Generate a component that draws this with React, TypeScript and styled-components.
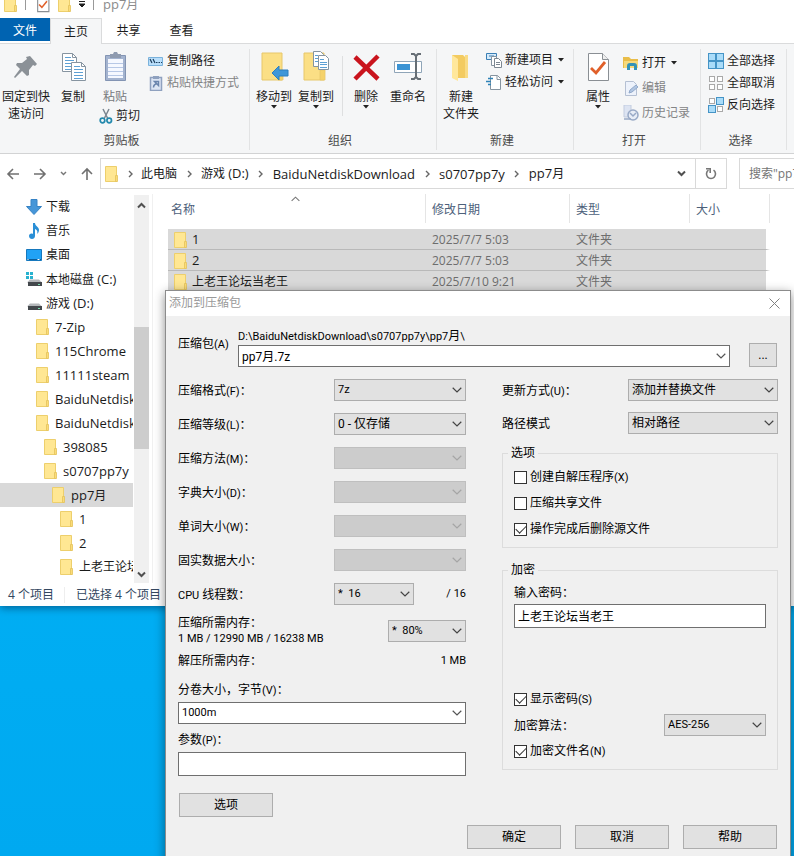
import React from 'react';
import styled, { createGlobalStyle } from 'styled-components';

const cjk = '"Noto Sans CJK SC"';
const shellFont = `"Open Sans", ${cjk}, sans-serif`;
const dialogFont = `Roboto, ${cjk}, sans-serif`;

const GlobalStyle = createGlobalStyle`
  * { box-sizing: border-box; }
  body { margin: 0; overflow: hidden; }
  button, input, select { font: inherit; color: inherit; border-radius: 0; margin: 0; }
  button { background: none; border: 0; padding: 0; }
`;

/* Sets Latin runs in a different size from the Chinese text around them. */
const LatinRun = styled.span`
  font-size: var(--latin-size);
`;
const Mixed = ({ text }: { text: string }) => (
  <>
    {text.split(/([\x21-\x7e][\x20-\x7e]*)/).map((part, i) =>
      i % 2 ? <LatinRun key={i}>{part}</LatinRun> : part,
    )}
  </>
);

const Desktop = styled.div`
  --latin-size: 13px;
  position: relative;
  height: 100vh;
  overflow: hidden;
  background: linear-gradient(#00b8fa, #00a9f0);
  font: 12px/16px ${shellFont};
  color: #1b1b1b;
`;

/* ---------- Explorer window ---------- */

const Explorer = styled.main`
  display: flex;
  flex-direction: column;
  background: #fff;
  box-shadow: 0 2px 8px rgba(0, 50, 90, 0.6);
`;

const TitleBar = styled.header`
  display: flex;
  align-items: center;
  height: 28px;
  margin-top: -10px;
  padding-left: 3px;
  color: #8b8b8b;
`;
const TitleItem = styled.span<{ $gap?: number }>`
  display: flex;
  margin-left: ${(p) => p.$gap ?? 0}px;
`;
const TitleRule = styled.span<{ $gap: number }>`
  width: 1px;
  height: 12px;
  margin-left: ${(p) => p.$gap}px;
  background: #999;
`;

const Tabs = styled.nav`
  display: flex;
  height: 26px;
  border-bottom: 1px solid #dadbdc;
`;
const Tab = styled.button<{ $kind?: 'file' | 'active' }>`
  width: ${(p) => (p.$kind === 'file' ? 50 : p.$kind === 'active' ? 52 : 53)}px;
  height: ${(p) => (p.$kind === 'file' ? 23 : 26)}px;
  padding-top: ${(p) => (p.$kind === 'file' ? 2 : 0)}px;
  ${(p) => p.$kind === 'file' && 'background: #0063b1; color: #fff;'}
  ${(p) => p.$kind === 'active' && 'background: #f5f6f7; border: 1px solid #dadbdc; border-bottom: 0;'}
`;

const Ribbon = styled.section`
  display: flex;
  height: 110px;
  background: #f5f6f7;
  border-bottom: 1px solid #d2d3d4;
`;
const Group = styled.section<{ $width: number }>`
  flex: none;
  display: flex;
  flex-direction: column;
  width: ${(p) => p.$width}px;
  margin: 5px 0 3px;
  border-right: 1px solid #e2e3e4;
`;
const GroupBody = styled.div<{ $pad?: number }>`
  display: flex;
  flex: 1;
  padding-left: ${(p) => p.$pad ?? 0}px;
`;
const GroupTitle = styled.h2`
  margin: 0;
  font: inherit;
  line-height: 18px;
  text-align: center;
  color: #4a4a4a;
  padding-right: 6px;
`;
const GroupRule = styled.span`
  width: 1px;
  height: 60px;
  margin: 7px 2px 0 5px;
  background: #dedfe0;
`;
const LargeButton = styled.button<{ $width: number }>`
  display: flex;
  flex-direction: column;
  align-items: center;
  align-self: flex-start;
  width: ${(p) => p.$width}px;
  padding-top: 1px;
  line-height: 17px;
  white-space: pre;
  svg:first-child { margin: 1px 0 5px; }
`;
const SmallColumn = styled.div<{ $gap?: number; $top?: number }>`
  display: flex;
  flex-direction: column;
  align-items: flex-start;
  gap: ${(p) => p.$gap ?? 0}px;
  margin: ${(p) => p.$top ?? 1}px 0 0 1px;
`;
const SmallButton = styled.button`
  display: flex;
  align-items: center;
  gap: 3px;
  height: 22px;
  white-space: nowrap;
  &:disabled { color: #838485; }
  span + svg { margin-left: 2px; }
`;
const PasteColumn = styled.div`
  display: flex;
  flex-direction: column;
  align-items: flex-start;
  width: 53px;
  color: #77797c;
  ${SmallButton} { color: #1b1b1b; margin-left: 5px; }
`;

const AddressRow = styled.section`
  display: flex;
  align-items: center;
  height: 40px;
  padding: 0 0 1px;
`;
const NavButtons = styled.div`
  display: flex;
  align-items: center;
  justify-content: space-between;
  width: 100px;
  padding: 0 6px 0 6px;
  button { display: flex; }
`;
const AddressBar = styled.div`
  flex: 1;
  display: flex;
  align-items: center;
  height: 31px;
  border: 1px solid #d9d9d9;
  padding-left: 3px;
`;
const Crumb = styled.button<{ $latin?: boolean }>`
  font-size: ${(p) => (p.$latin ? 13 : 12)}px;
  white-space: nowrap;
`;
const CrumbGap = styled.span<{ $first?: boolean }>`
  display: flex;
  justify-content: center;
  width: ${(p) => (p.$first ? 21 : 24)}px;
`;
const AddressEnd = styled.button<{ $ruled?: boolean }>`
  display: flex;
  align-items: center;
  justify-content: center;
  width: ${(p) => (p.$ruled ? 31 : 28)}px;
  height: 29px;
  margin-left: ${(p) => (p.$ruled ? 0 : 'auto')};
  border-left: ${(p) => (p.$ruled ? '1px solid #d9d9d9' : '0')};
`;
const SearchBox = styled.input`
  width: 55px;
  height: 31px;
  margin-left: 12px;
  padding: 0 0 0 9px;
  border: 1px solid #d9d9d9;
  border-right: 0;
  color: #6d6d6d;
  outline: 0;
`;

const Content = styled.div`
  display: flex;
  height: 389px;
`;
const Tree = styled.ul`
  list-style: none;
  margin: 0;
  padding: 1px 0 0;
  width: 133px;
  overflow: hidden;
`;
const TreeItem = styled.button<{ $indent: number; $selected?: boolean }>`
  display: flex;
  align-items: center;
  gap: 4px;
  width: 100%;
  height: 24px;
  padding-left: ${(p) => p.$indent}px;
  background: ${(p) => (p.$selected ? '#d9d9d9' : 'transparent')};
  white-space: nowrap;
  text-align: left;
  svg { flex: none; }
`;
const ScrollBar = styled.div`
  display: flex;
  flex-direction: column;
  align-items: center;
  width: 15px;
  margin: 1px 0 0 1px;
  padding: 7px 0 5px;
  background: #f0f0f0;
`;
const ScrollThumb = styled.span`
  width: 15px;
  height: 122px;
  margin: 118px 0 auto;
  background: #cdcdcd;
`;
const FilePane = styled.section`
  flex: 1;
  margin-left: 3px;
  padding-left: 15px;
  border-left: 1px solid #f0f0f0;
`;
const FileTable = styled.table`
  width: 602px;
  table-layout: fixed;
  border-collapse: separate;
  border-spacing: 0;
  th {
    position: relative;
    height: 29px;
    padding: 3px 0 0 6px;
    font-weight: normal;
    text-align: left;
    color: #4c607a;
    border-right: 1px solid #e5e5e5;
  }
  th:first-child { padding-left: 3px; }
  tbody::before { content: ''; display: block; height: 6px; }
  td {
    height: 21px;
    padding: 1px 0 0 6px;
    background: #d9d9d9;
    border-bottom: 1px solid #b9b9b9;
    color: #6d6d6d;
  }
  td:first-child { padding-left: 5px; color: #1b1b1b; }
  td:last-child { border-right: 4px solid #fff; }
`;
const SortMark = styled.span`
  position: absolute;
  left: 123px;
  top: 2px;
  display: flex;
`;
const FileName = styled.span`
  display: flex;
  align-items: center;
  gap: 3px;
`;
const StatusBar = styled.footer`
  display: flex;
  align-items: center;
  gap: 10px;
  height: 23px;
  padding-left: 8px;
  color: #33475f;
  span + span { border-left: 1px solid #eee; padding-left: 11px; }
`;

/* ---------- Add to archive dialog ---------- */

const Dialog = styled.section`
  --latin-size: 11px;
  position: absolute;
  left: 165px;
  right: 3px;
  top: 290px;
  border: 1px solid #8c8c8c;
  background: #f0f0f0;
  color: #000;
  font-family: ${dialogFont};
  box-shadow: 0 3px 10px rgba(0, 0, 0, 0.45);
`;
const DialogTitle = styled.header`
  display: flex;
  align-items: center;
  justify-content: space-between;
  height: 25px;
  padding: 0 10px 1px 3px;
  background: #fff;
  color: #999;
  button { display: flex; }
`;
const DialogBody = styled.form`
  padding: 12px 12px 24px;
`;
const ArchiveRow = styled.div`
  display: flex;
  align-items: flex-end;
  padding-right: 1px;
`;
const ArchiveLabel = styled.label`
  width: 60px;
  padding-bottom: 14px;
`;
const ArchiveField = styled.div`
  flex: 1;
  margin-right: 19px;
`;
const Path = styled.div`
  line-height: 16px;
`;
const PushButton = styled.button<{ $small?: boolean }>`
  width: ${(p) => (p.$small ? 28 : 94)}px;
  height: 24px;
  border: 1px solid #adadad;
  background: #e1e1e1;
`;
const Columns = styled.div`
  display: grid;
  grid-template-columns: 288px minmax(0, 1fr);
  gap: 36px;
  margin-top: 12px;
`;
const Column = styled.div`
  display: flex;
  flex-direction: column;
`;
const FieldRow = styled.div<{ $top?: number }>`
  display: flex;
  align-items: center;
  justify-content: space-between;
  min-height: 22px;
  margin-top: ${(p) => p.$top ?? 12}px;
`;
const FieldLabel = styled.label`
  padding-top: 2px;
`;
const MemoryText = styled.label`
  line-height: 15px;
`;
const TextRow = styled.div<{ $top: number }>`
  display: flex;
  justify-content: space-between;
  margin-top: ${(p) => p.$top}px;
`;
const Threads = styled.div`
  display: flex;
  align-items: center;
  justify-content: space-between;
  width: 132px;
`;
const Box = styled.span<{ $width?: number; $top?: number }>`
  position: relative;
  display: block;
  width: ${(p) => (p.$width ? `${p.$width}px` : '100%')};
  height: 22px;
  margin-top: ${(p) => p.$top ?? 0}px;
  svg { position: absolute; right: 4px; top: 8px; pointer-events: none; }
`;
const SelectControl = styled.select<{ $latin?: boolean }>`
  appearance: none;
  display: block;
  width: 100%;
  height: 22px;
  padding: 0 16px 0 3px;
  border: 1px solid #adadad;
  background: #e1e1e1;
  font-size: ${(p) => (p.$latin ? 'var(--latin-size)' : '12px')};
  white-space: pre;
  &:disabled { background: #cccccc; border-color: #bfbfbf; opacity: 1; }
`;
const TextBox = styled.input<{ $combo?: boolean; $latin?: boolean; $top?: number }>`
  display: block;
  width: 100%;
  height: ${(p) => (p.$combo ? 22 : 24)}px;
  margin-top: ${(p) => p.$top ?? 0}px;
  padding: 0 3px 2px;
  border: 1px solid #6f6f6f;
  background: #fff;
  outline: 0;
  font-size: ${(p) => (p.$latin ? 'var(--latin-size)' : '12px')};
`;
const Fieldset = styled.fieldset<{ $top: number; $pad: number }>`
  min-width: 0;
  margin: ${(p) => p.$top}px 0 0;
  padding: ${(p) => p.$pad}px 11px 5px;
  border: 1px solid #dcdcdc;
  legend { padding: 0 3px; margin-left: -6px; line-height: 16px; }
`;
const CheckLabel = styled.label<{ $top?: number }>`
  display: flex;
  align-items: center;
  gap: 3px;
  height: 26px;
  margin-top: ${(p) => p.$top ?? 0}px;
`;
const CheckBox = styled.input`
  appearance: none;
  width: 13px;
  height: 13px;
  border: 1px solid #333;
  background: #fff;
  display: grid;
  place-items: center;
  &:checked::before {
    content: '';
    width: 9px;
    height: 5px;
    border: solid #333;
    border-width: 0 0 1px 1px;
    transform: rotate(-45deg);
    margin-bottom: 3px;
  }
`;
const Footer = styled.footer`
  display: flex;
  justify-content: flex-end;
  gap: 14px;
  margin-top: 8px;
  padding-right: 1px;
`;
const OptionsButton = styled(PushButton)`
  margin: 17px 0 0 1px;
`;

/* ---------- Icons ---------- */

const Chevron = ({ color = '#555', up = false, w = 10 }: { color?: string; up?: boolean; w?: number }) => (
  <svg width={w} height="6" viewBox="0 0 10 6" fill="none" stroke={color} strokeWidth="1.2">
    <path d={up ? 'M.7 5.2 5 1l4.300 4.200' : 'M.7.8 5 5 9.300.8'} />
  </svg>
);
const ThickChevron = ({ up = false, small = false }: { up?: boolean; small?: boolean }) => (
  <svg width={small ? 7 : 9} height={small ? 5 : 7} viewBox="0 0 9 7" fill="none" stroke={small ? '#777' : '#505050'} strokeWidth="2">
    <path d={up ? 'M1 5.500 4.500 2 8 5.500' : 'M1 1.500 4.500 5 8 1.500'} />
  </svg>
);
const Drop = () => (
  <svg width="6" height="4" viewBox="0 0 6 4"><path d="M0 0h6L3 3.500z" fill="#222" /></svg>
);
const FolderIcon = ({ size = 16 }: { size?: number }) => (
  <svg width={size} height={size} viewBox="0 0 16 16">
    <path d="M1.500.5h11v15h-11z" fill="#ffe793" stroke="#edcf6c" />
    <path d="M11.500 9.500h2v6h-2z" fill="#fbdc78" stroke="#e3c15b" strokeWidth=".8" />
  </svg>
);
const BigFolder = () => (
  <>
    <path d="M4 2h20v27H4z" fill="#fbdf85" stroke="#e7c76b" />
    <path d="M20 19h5v10h-5z" fill="#f5d26b" stroke="#e7c76b" strokeWidth=".8" />
  </>
);
const PinIcon = () => (
  <svg width="32" height="32" viewBox="0 0 32 32">
    <path d="m20 5 7 8-2 2-2-1-4 5 0 5-2 1-5-5-7 7-1-1 6-8-4-4 1-2 5 0 5-4-1-2z" fill="#8b9197" />
  </svg>
);
const Page = ({ x, y }: { x: number; y: number }) => (
  <g transform={`translate(${x} ${y})`}>
    <path d="M.5.500h10l4 4v14H.5z" fill="#fff" stroke="#8694a0" />
    <path d="M10.500.5v4h4" fill="none" stroke="#8694a0" />
    <path d="M3 4.500h6M3 7.500h9M3 10.500h9M3 13.500h9M3 16.500h9" stroke="#5da0d4" />
  </g>
);
const CopyIcon = () => (
  <svg width="32" height="32" viewBox="0 0 32 32"><Page x={5} y={2} /><Page x={14} y={11} /></svg>
);
const PasteIcon = () => (
  <svg width="32" height="32" viewBox="0 0 32 32">
    <path d="M6.500 4.500h20v25h-20z" fill="#a3b3cf" stroke="#8394b3" />
    <path d="M9 8h15v19H9z" fill="#f5f8ff" />
    <path d="M9 12.500h15M9 16.500h15M9 20.500h15M9 24.500h15" stroke="#b7c8e6" />
    <path d="M11 3h3l1-2h3l1 2h3v4H11z" fill="#8f9bb0" />
  </svg>
);
const CutIcon = () => (
  <svg width="14" height="16" viewBox="0 0 14 16" fill="none">
    <path d="m4 1 5 10M10 1 5 11" stroke="#7b8690" strokeWidth="1.500" />
    <circle cx="3.500" cy="12.500" r="2.300" stroke="#2389ad" strokeWidth="1.700" />
    <circle cx="10.200" cy="12.500" r="2.300" stroke="#2389ad" strokeWidth="1.700" />
  </svg>
);
const PathIcon = () => (
  <svg width="16" height="16" viewBox="0 0 16 16">
    <path d="M.5 4.500h14v8H.5z" fill="#b9defa" stroke="#7ab2dc" />
    <path d="m2 6 2 4M5 6l2 4" stroke="#1d3f5e" strokeWidth="1.200" />
    <path d="M8 9.500h1.500m1 0H12m1 0h1" stroke="#1d3f5e" />
  </svg>
);
const ShortcutIcon = () => (
  <svg width="16" height="16" viewBox="0 0 16 16">
    <path d="M2.500 2.500h11v13h-11z" fill="#dce5f4" stroke="#8fa1bf" strokeWidth="1.500" />
    <path d="M5 1h6v3H5z" fill="#8fa1bf" />
    <path d="M5.500 12.500q0-3 3.500-4M6.500 6.500h4v4z" fill="none" stroke="#6a84ad" strokeWidth="1.500" />
  </svg>
);
const MoveIcon = () => (
  <svg width="32" height="32" viewBox="0 0 32 32">
    <BigFolder />
    <path d="m14 22 7-7v4h9v6h-9v4z" fill="#3f97d8" stroke="#2c7fc0" />
  </svg>
);
const CopyToIcon = () => (
  <svg width="32" height="32" viewBox="0 0 32 32">
    <BigFolder />
    <g fill="#fff" stroke="#8694a0">
      <path d="M13.500.5h7l3 3v12h-10z" /><path d="M18.500 4.500h7l3 3v11h-10z" />
    </g>
    <path d="M15 4.500h3m-3 3h3m-3 3h3m2-2h4m-4 3h7m-7 2h7m-7 3h7" stroke="#5da0d4" />
  </svg>
);
const DeleteIcon = () => (
  <svg width="32" height="32" viewBox="0 0 32 32">
    <path d="m5 6 23 22M28 5 5 28" stroke="#c9141d" strokeWidth="4.500" />
  </svg>
);
const RenameIcon = () => (
  <svg width="32" height="32" viewBox="0 0 32 32" fill="none">
    <path d="M2.500 10.500h27v11h-27z" fill="#fff" stroke="#8fa5b8" />
    <path d="M5 13h13v6H5z" fill="#3a93d4" />
    <path d="M19 3h3l2 2 2-2h3M24 5v21M19 28h3l2-2 2 2h3" stroke="#666e75" strokeWidth="2" />
  </svg>
);
const NewFolderIcon = () => (
  <svg width="32" height="32" viewBox="0 0 32 32">
    <path d="M7 4h11l5 5v18H7z" fill="#f3cb61" />
    <path d="m7 4 6 4v22l-6-3z" fill="#ffe79b" />
    <path d="M20 4h3v23h-3z" fill="#f9db84" />
  </svg>
);
const NewItemIcon = () => (
  <svg width="16" height="16" viewBox="0 0 16 16" fill="#fff">
    <path d="M.5 1.500h10v6H.5z" fill="#d5eafa" stroke="#3a7fb5" />
    <path d="M3 4h5" stroke="#3a7fb5" />
    <path d="M5.500 4.500h5v9h-5z" stroke="#8694a0" />
    <path d="M8.500 6.500h4l3 3v6h-7z" stroke="#7c8791" />
    <path d="M10 10.500h4m-4 2h4" stroke="#7c8791" />
  </svg>
);
const EasyAccessIcon = () => (
  <svg width="16" height="16" viewBox="0 0 16 16">
    <path d="M4.500 1.500h7l3 3v11h-10z" fill="#fff" stroke="#8694a0" />
    <path d="M11 1.500v4h4" fill="none" stroke="#8694a0" />
    <path d="M2 4.500h5m-7 3h5m-3 3h3" stroke="#2f83b8" strokeWidth="1.500" />
  </svg>
);
const CheckPage = ({ size }: { size: number }) => (
  <svg width={size} height={size} viewBox="0 0 32 32">
    <path d="M6.500 2.500h14l6 6v21h-20z" fill="#fff" stroke="#8a8f94" strokeWidth={size < 20 ? 2 : 1} />
    <path d="M20.500 2.500v6h6" fill="#eee" stroke="#8a8f94" />
    <path d="m9 17 5 5 9-11" fill="none" stroke="#e0602a" strokeWidth="2.800" />
  </svg>
);
const OpenIcon = () => (
  <svg width="16" height="16" viewBox="0 0 16 16">
    <path d="M0 2h6l2 2h7v9H0z" fill="#e9bd49" /><path d="M1 6h14v7H1z" fill="#f7da7c" />
    <path d="M4 15V11q0-3 3-3h4q3 0 3 3v4h-3v-4H7v4z" fill="#3493b8" />
  </svg>
);
const EditIcon = () => (
  <svg width="16" height="16" viewBox="0 0 16 16">
    <path d="M2.500 1.500h8l3 3v11h-11z" fill="#edf2fb" stroke="#b5c0d3" />
    <path d="m6 13 1-3 6-5 2 2-6 5z" fill="#b1c6e2" stroke="#92a9ca" />
  </svg>
);
const HistoryIcon = () => (
  <svg width="16" height="16" viewBox="0 0 16 16">
    <path d="M1 0h7v12H1z" fill="#dde4f2" stroke="#c2ccdf" />
    <circle cx="10" cy="10" r="5" fill="#e8edf6" stroke="#98a9c6" strokeWidth="1.500" />
    <path d="m7 8 3 3 3-3M1 14h7" fill="none" stroke="#98a9c6" strokeWidth="1.500" />
  </svg>
);
const GridIcon = ({ on }: { on: boolean[] }) => (
  <svg width="16" height="16" viewBox="0 0 16 16">
    {on.map((selected, i) => (
      <rect
        key={i}
        x={(i % 2) * 8 + (selected ? 0.5 : 1.500)}
        y={Math.floor(i / 2) * 8 + (selected ? 0.5 : 1.500)}
        width={selected ? 7 : 5}
        height={selected ? 7 : 5}
        fill={selected ? '#aadcf9' : '#fff'}
        stroke={selected ? '#4594c6' : '#a9a9a9'}
      />
    ))}
  </svg>
);
const Arrow = ({ turn, color = '#707070' }: { turn: number; color?: string }) => (
  <svg width="14" height="14" viewBox="0 0 14 14" fill="none" stroke={color} strokeWidth="1.600">
    <path d="M13 7H2m5-5L2 7l5 5" transform={`rotate(${turn} 7 7)`} />
  </svg>
);
const RefreshIcon = () => (
  <svg width="12" height="13" viewBox="0 0 12 13" fill="none" stroke="#777" strokeWidth="1.600">
    <path d="M8.500 3.200A4.500 4.500 0 1 1 3.500 3.200M1 1.800h4.200V6" />
  </svg>
);
const DownloadIcon = () => (
  <svg width="16" height="16" viewBox="0 0 16 16"><path d="M5 .5h6v7h4.500L8 15.500.5 7.500H5z" fill="#4696d8" stroke="#3683c5" /></svg>
);
const MusicIcon = () => (
  <svg width="16" height="16" viewBox="0 0 16 16">
    <path d="M7 0h2c0 3 4 4 4 7 0 2-1 3-2 4 1-3 0-4-2-5v7c0 4-6 4-6 0 0-2 2-3 4-2z" fill="#2a8fd6" />
  </svg>
);
const DesktopIcon = () => (
  <svg width="16" height="16" viewBox="0 0 16 16">
    <path d="M.5 2.500h15v11H.5z" fill="#21a2f5" stroke="#1678bd" /><path d="M1 12.500h14" stroke="#0b5d9a" />
    <path d="M1.500 12.500h1m9 0h2" stroke="#fff" />
  </svg>
);
const DriveIcon = ({ system }: { system?: boolean }) => (
  <svg width="16" height="16" viewBox="0 0 16 16">
    {system && <path d="M0 1h3v3H0zm4 0h3v3H4zM0 5h3v3H0zm4 0h3v3H4z" fill="#28b2cf" />}
    <path d="m4 8.500 9 0 3 3H1z" fill="#b4b7ba" /><path d="M2 11h14v4H2z" fill="#43484c" />
    <path d="M12 13.500h2" stroke="#7be0b0" />
  </svg>
);
const CloseIcon = () => (
  <svg width="11" height="11" viewBox="0 0 11 11"><path d="m.5.500 10 10m0-10-10 10" stroke="#808080" /></svg>
);
const Arrowhead = () => (
  <svg width="5" height="8" viewBox="0 0 5 8" fill="none" stroke="#666" strokeWidth="1.400">
    <path d="m1 1 3 3-3 3" />
  </svg>
);

/* ---------- Content ---------- */

const tree: { label: string; indent: number; icon?: React.ReactNode; selected?: boolean }[] = [
  { label: '下载', indent: 26, icon: <DownloadIcon /> },
  { label: '音乐', indent: 26, icon: <MusicIcon /> },
  { label: '桌面', indent: 26, icon: <DesktopIcon /> },
  { label: '本地磁盘 (C:)', indent: 26, icon: <DriveIcon system /> },
  { label: '游戏 (D:)', indent: 26, icon: <DriveIcon /> },
  { label: '7-Zip', indent: 35 },
  { label: '115Chrome', indent: 35 },
  { label: '11111steam', indent: 35 },
  { label: 'BaiduNetdisk', indent: 35 },
  { label: 'BaiduNetdisk', indent: 35 },
  { label: '398085', indent: 43 },
  { label: 's0707pp7y', indent: 43 },
  { label: 'pp7月', indent: 51, selected: true },
  { label: '1', indent: 59 },
  { label: '2', indent: 59 },
  { label: '上老王论坛', indent: 59 },
];

const files = [
  ['1', '2025/7/7 5:03'],
  ['2', '2025/7/7 5:03'],
  ['上老王论坛当老王', '2025/7/10 9:21'],
];

const formats = [
  { id: 'format', label: '压缩格式(F)：', value: '7z' },
  { id: 'level', label: '压缩等级(L)：', value: '0 - 仅存储' },
  { id: 'method', label: '压缩方法(M)：' },
  { id: 'dictionary', label: '字典大小(D)：' },
  { id: 'word', label: '单词大小(W)：' },
  { id: 'solid', label: '固实数据大小：' },
];

type SelectProps = { id: string; value?: string; width: number; latin?: boolean };
const Select = ({ id, value, width, latin }: SelectProps) => (
  <Box $width={width}>
    <SelectControl id={id} $latin={latin} disabled={!value}>
      <option>{value ?? ''}</option>
    </SelectControl>
    <Chevron color={value ? '#444' : '#a5a5a5'} />
  </Box>
);
const Check = ({ text, on, top }: { text: string; on?: boolean; top?: number }) => (
  <CheckLabel $top={top}>
    <CheckBox type="checkbox" defaultChecked={on} />
    <span><Mixed text={text} /></span>
  </CheckLabel>
);

const ExplorerWindow = () => (
  <Explorer>
    <TitleBar>
      <TitleItem><FolderIcon /></TitleItem>
      <TitleRule $gap={6} />
      <TitleItem $gap={8}><CheckPage size={18} /></TitleItem>
      <TitleItem $gap={5}><FolderIcon /></TitleItem>
      <TitleItem $gap={5}>
        <svg width="8" height="8" viewBox="0 0 8 8"><path d="M1 1.500h6M1 4h6L4 7z" fill="#222" stroke="#222" /></svg>
      </TitleItem>
      <TitleRule $gap={7} />
      <TitleItem $gap={9}><span><Mixed text="pp7月" /></span></TitleItem>
    </TitleBar>
    <Tabs>
      <Tab $kind="file">文件</Tab>
      <Tab $kind="active">主页</Tab>
      <Tab>共享</Tab>
      <Tab>查看</Tab>
    </Tabs>
    <Ribbon>
      <Group $width={250}>
        <GroupBody>
          <LargeButton $width={52}><PinIcon />{'固定到快\n速访问'}</LargeButton>
          <LargeButton $width={42}><CopyIcon />复制</LargeButton>
          <PasteColumn>
            <LargeButton $width={42}><PasteIcon />粘贴</LargeButton>
            <SmallButton><CutIcon />剪切</SmallButton>
          </PasteColumn>
          <SmallColumn>
            <SmallButton><PathIcon />复制路径</SmallButton>
            <SmallButton disabled><ShortcutIcon />粘贴快捷方式</SmallButton>
          </SmallColumn>
        </GroupBody>
        <GroupTitle>剪贴板</GroupTitle>
      </Group>
      <Group $width={187}>
        <GroupBody $pad={3}>
          <LargeButton $width={42}><MoveIcon />移动到<Drop /></LargeButton>
          <LargeButton $width={42}><CopyToIcon />复制到<Drop /></LargeButton>
          <GroupRule />
          <LargeButton $width={42}><DeleteIcon />删除<Drop /></LargeButton>
          <LargeButton $width={42}><RenameIcon />重命名</LargeButton>
        </GroupBody>
        <GroupTitle>组织</GroupTitle>
      </Group>
      <Group $width={137}>
        <GroupBody>
          <LargeButton $width={48}><NewFolderIcon />{'新建\n文件夹'}</LargeButton>
          <SmallColumn $top={0}>
            <SmallButton><NewItemIcon /><span>新建项目</span><Drop /></SmallButton>
            <SmallButton><EasyAccessIcon /><span>轻松访问</span><Drop /></SmallButton>
          </SmallColumn>
        </GroupBody>
        <GroupTitle>新建</GroupTitle>
      </Group>
      <Group $width={127}>
        <GroupBody>
          <LargeButton $width={48}><CheckPage size={32} />属性<Drop /></LargeButton>
          <SmallColumn $gap={3} $top={3}>
            <SmallButton><OpenIcon /><span>打开</span><Drop /></SmallButton>
            <SmallButton disabled><EditIcon />编辑</SmallButton>
            <SmallButton disabled><HistoryIcon />历史记录</SmallButton>
          </SmallColumn>
        </GroupBody>
        <GroupTitle>打开</GroupTitle>
      </Group>
      <Group $width={86}>
        <GroupBody $pad={6}>
          <SmallColumn>
            <SmallButton><GridIcon on={[true, true, true, true]} />全部选择</SmallButton>
            <SmallButton><GridIcon on={[false, false, false, false]} />全部取消</SmallButton>
            <SmallButton><GridIcon on={[false, true, true, false]} />反向选择</SmallButton>
          </SmallColumn>
        </GroupBody>
        <GroupTitle>选择</GroupTitle>
      </Group>
    </Ribbon>
    <AddressRow>
      <NavButtons>
        <button aria-label="后退"><Arrow turn={0} /></button>
        <button aria-label="前进"><Arrow turn={180} /></button>
        <button aria-label="最近"><ThickChevron small /></button>
        <button aria-label="向上"><Arrow turn={90} /></button>
      </NavButtons>
      <AddressBar>
        <FolderIcon />
        <CrumbGap $first><Arrowhead /></CrumbGap>
        <Crumb>此电脑</Crumb>
        <CrumbGap><Arrowhead /></CrumbGap>
        <Crumb><Mixed text="游戏 (D:)" /></Crumb>
        <CrumbGap><Arrowhead /></CrumbGap>
        <Crumb $latin>BaiduNetdiskDownload</Crumb>
        <CrumbGap><Arrowhead /></CrumbGap>
        <Crumb $latin>s0707pp7y</Crumb>
        <CrumbGap><Arrowhead /></CrumbGap>
        <Crumb><Mixed text="pp7月" /></Crumb>
        <AddressEnd aria-label="历史"><ThickChevron /></AddressEnd>
        <AddressEnd aria-label="刷新" $ruled><RefreshIcon /></AddressEnd>
      </AddressBar>
      <SearchBox aria-label="搜索" placeholder='搜索"pp7月"' />
    </AddressRow>
    <Content>
      <Tree>
        {tree.map((node, i) => (
          <li key={i}>
            <TreeItem $indent={node.indent} $selected={node.selected}>
              {node.icon ?? <FolderIcon />}
              <span><Mixed text={node.label} /></span>
            </TreeItem>
          </li>
        ))}
      </Tree>
      <ScrollBar><ThickChevron up /><ScrollThumb /><ThickChevron /></ScrollBar>
      <FilePane>
        <FileTable>
          <colgroup><col width="258" /><col width="144" /><col width="120" /><col width="80" /></colgroup>
          <thead>
            <tr>
              <th>名称<SortMark><Chevron up w={9} color="#777" /></SortMark></th>
              <th>修改日期</th><th>类型</th><th>大小</th>
            </tr>
          </thead>
          <tbody>
            {files.map(([name, date]) => (
              <tr key={name}>
                <td><FileName><FolderIcon /><span><Mixed text={name} /></span></FileName></td>
                <td>{date}</td><td>文件夹</td><td />
              </tr>
            ))}
          </tbody>
        </FileTable>
      </FilePane>
    </Content>
    <StatusBar><span>4 个项目</span><span>已选择 4 个项目</span></StatusBar>
  </Explorer>
);

const ArchiveDialog = () => (
  <Dialog role="dialog" aria-labelledby="dialog-title">
    <DialogTitle>
      <span id="dialog-title">添加到压缩包</span>
      <button aria-label="关闭"><CloseIcon /></button>
    </DialogTitle>
    <DialogBody onSubmit={(e) => e.preventDefault()}>
      <ArchiveRow>
        <ArchiveLabel htmlFor="archive"><Mixed text="压缩包(A)" /></ArchiveLabel>
        <ArchiveField>
          <Path><Mixed text="D:\BaiduNetdiskDownload\s0707pp7y\pp7月\" /></Path>
          <Box>
            <TextBox id="archive" $combo defaultValue="pp7月.7z" />
            <Chevron />
          </Box>
        </ArchiveField>
        <PushButton type="button" $small>...</PushButton>
      </ArchiveRow>
      <Columns>
        <Column>
          {formats.map((f, i) => (
            <FieldRow key={f.id} $top={i ? 12 : 0}>
              <FieldLabel htmlFor={f.id}><Mixed text={f.label} /></FieldLabel>
              <Select id={f.id} value={f.value} width={132} latin={f.id === 'format'} />
            </FieldRow>
          ))}
          <FieldRow>
            <FieldLabel htmlFor="threads"><Mixed text="CPU" /> 线程数：</FieldLabel>
            <Threads>
              <Select id="threads" value={'*\u00a0 16'} width={80} latin />
              <LatinRun>/ 16</LatinRun>
            </Threads>
          </FieldRow>
          <FieldRow $top={11}>
            <MemoryText htmlFor="memory">
              压缩所需内存：<br /><Mixed text="1 MB / 12990 MB / 16238 MB" />
            </MemoryText>
            <Select id="memory" value={'*\u00a0 80%'} width={78} latin />
          </FieldRow>
          <TextRow $top={7}><span>解压所需内存：</span><LatinRun>1 MB</LatinRun></TextRow>
          <TextRow $top={13}><label htmlFor="volume"><Mixed text="分卷大小，字节(V)：" /></label></TextRow>
          <Box $top={3}>
            <TextBox id="volume" $combo $latin defaultValue="1000m" />
            <Chevron />
          </Box>
          <TextRow $top={8}><label htmlFor="parameters"><Mixed text="参数(P)：" /></label></TextRow>
          <TextBox id="parameters" $top={3} />
          <OptionsButton type="button">选项</OptionsButton>
        </Column>
        <Column>
          <FieldRow $top={0}>
            <FieldLabel htmlFor="update"><Mixed text="更新方式(U)：" /></FieldLabel>
            <Select id="update" value="添加并替换文件" width={150} />
          </FieldRow>
          <FieldRow $top={11}>
            <FieldLabel htmlFor="path-mode">路径模式</FieldLabel>
            <Select id="path-mode" value="相对路径" width={150} />
          </FieldRow>
          <Fieldset $top={11} $pad={3}>
            <legend>选项</legend>
            <Check text="创建自解压程序(X)" />
            <Check text="压缩共享文件" />
            <Check text="操作完成后删除源文件" on />
          </Fieldset>
          <Fieldset $top={14} $pad={7}>
            <legend>加密</legend>
            <label htmlFor="password">输入密码：</label>
            <TextBox id="password" $top={3} defaultValue="上老王论坛当老王" />
            <Check text="显示密码(S)" on top={58} />
            <FieldRow $top={2}>
              <FieldLabel htmlFor="cipher">加密算法：</FieldLabel>
              <Select id="cipher" value="AES-256" width={102} latin />
            </FieldRow>
            <Check text="加密文件名(N)" on top={2} />
          </Fieldset>
        </Column>
      </Columns>
      <Footer>
        <PushButton type="submit">确定</PushButton>
        <PushButton type="button">取消</PushButton>
        <PushButton type="button">帮助</PushButton>
      </Footer>
    </DialogBody>
  </Dialog>
);

export default function App() {
  return (
    <Desktop>
      <GlobalStyle />
      <ExplorerWindow />
      <ArchiveDialog />
    </Desktop>
  );
}
